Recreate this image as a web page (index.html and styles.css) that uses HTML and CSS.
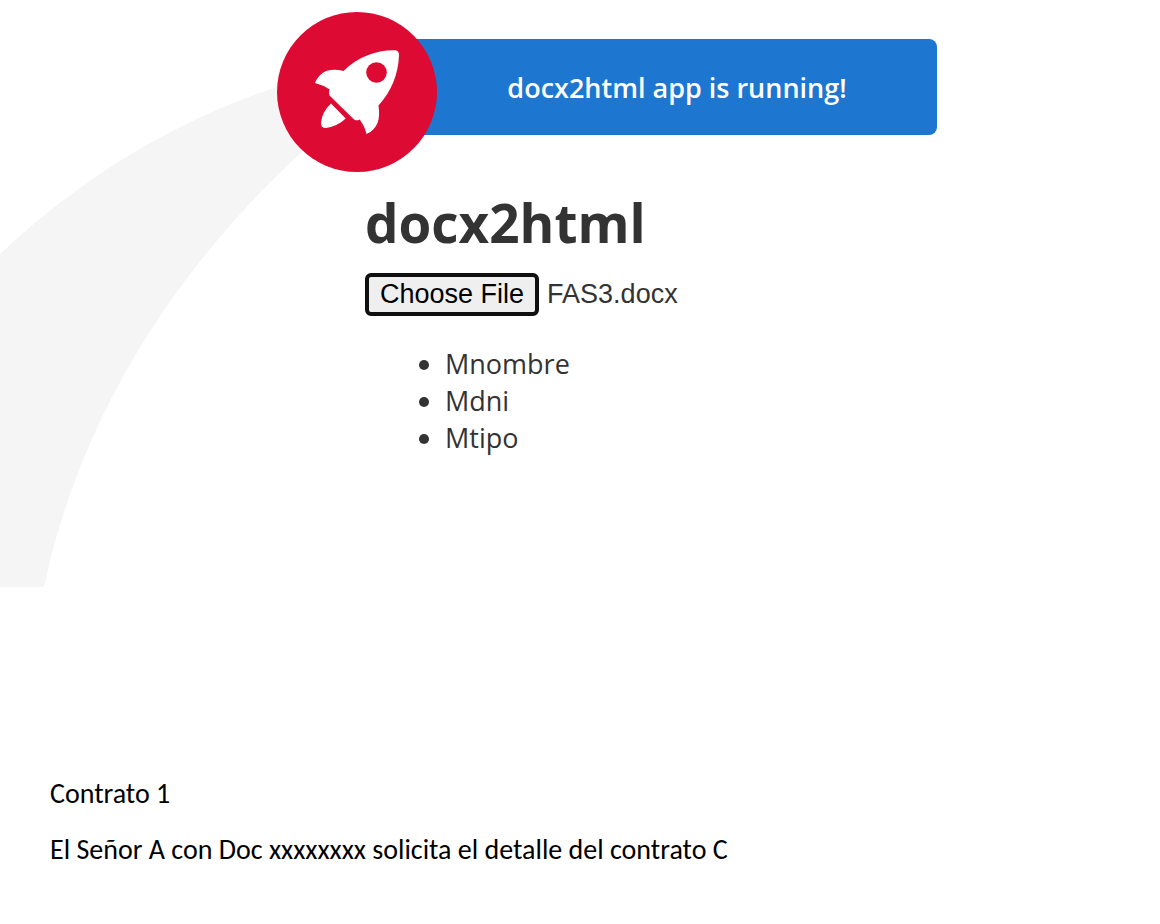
FILE: index.html
```html
<!DOCTYPE html>
<html lang="es">
<head>
<meta charset="utf-8">
<title>docx2html</title>
<link rel="stylesheet" href="styles.css">
</head>
<body>
<svg class="smoke" width="320" height="587" viewBox="0 0 320 587" aria-hidden="true">
  <path d="M0 254C75 184 165 124 277 87L320 76V140L303 151C175 268 80 417 44 587H0Z"/>
</svg>
<main class="content">
  <section class="card">
    <svg class="rocket" width="160" height="160" viewBox="0 0 160 160" aria-hidden="true">
      <circle class="rocket-disc" cx="80" cy="80" r="80"/>
      <path class="rocket-shape" d="M66.500 59C81 45 98 38.500 117 38.300Q122 38 122 43C121.500 62 114.500 79 101.500 93.500C103.500 107 101 117 89.500 122Q88 115 82.700 107.500C80 109 78 108.500 76 106.500L53 84Q51 81 52.700 77.500Q46 73 38 71Q45 54 66.500 59ZM54 91.500L68.700 106.500Q61 114 49 116Q43.500 116 44 110.500Q45 100 54 91.500Z"/>
      <circle class="rocket-disc" cx="99.500" cy="60.500" r="10.300"/>
    </svg>
    <span class="card-text">docx2html app is running!</span>
  </section>
  <h1 class="title">docx2html</h1>
  <div class="picker">
    <input id="file" type="file" accept=".docx" aria-label="Choose File" hidden>
    <button class="picker-button" type="button">Choose File</button>
    <span class="picker-name">FAS3.docx</span>
  </div>
  <ul class="fields">
    <li>Mnombre</li>
    <li>Mdni</li>
    <li>Mtipo</li>
  </ul>
</main>
<article class="document">
  <p>Contrato 1</p>
  <p>El Señor A con Doc xxxxxxxx solicita el detalle del contrato C</p>
</article>
<script src="app.js"></script>
</body>
</html>
```
FILE: styles.css
```css
* { box-sizing: border-box; }
body {
  margin: 0;
  background: #fff;
  color: #333;
  font-family: "Segoe UI", "Open Sans", sans-serif;
  font-size: 27px;
}
.smoke {
  position: absolute;
  top: 0;
  left: 0;
  z-index: -1;
  fill: #f5f5f5;
}
.content {
  max-width: 937px;
  padding: 39px 0 0 365px;
}
.card {
  position: relative;
  display: flex;
  align-items: center;
  justify-content: center;
  min-height: 96px;
  padding-left: 52px;
  border-radius: 8px;
  background: #1d76cf;
  color: #fff;
}
.rocket {
  position: absolute;
  top: -27px;
  left: -88px;
}
.rocket-disc { fill: #dd0a34; }
.rocket-shape { fill: #fff; }
.card-text { font-weight: 600; }
.title {
  margin: 52px 0 14px;
  font-size: 53px;
  line-height: 72px;
}
.picker {
  display: flex;
  align-items: center;
  gap: 8px;
  font-family: "Liberation Sans", Arial, sans-serif;
}
.picker-button {
  min-height: 43px;
  padding: 0 11px;
  border: 4px solid #101010;
  border-radius: 6px;
  background: #efefef;
  color: #000;
  font: inherit;
}
.fields {
  margin: 29px 0 0;
  padding-left: 80px;
  line-height: 37px;
}
.document {
  padding: 322px 50px 0;
  color: #000;
  font-family: Calibri, Carlito, Lato, sans-serif;
  font-size: 28px;
  line-height: 32px;
}
.document p { margin: 0 0 24px; }
```
FILE: app.js
```js
const input = document.getElementById("file");
const fileName = document.querySelector(".picker-name");
document.querySelector(".picker-button").addEventListener("click", () => input.click());
input.addEventListener("change", () => {
  if (input.files.length) fileName.textContent = input.files[0].name;
});
```
